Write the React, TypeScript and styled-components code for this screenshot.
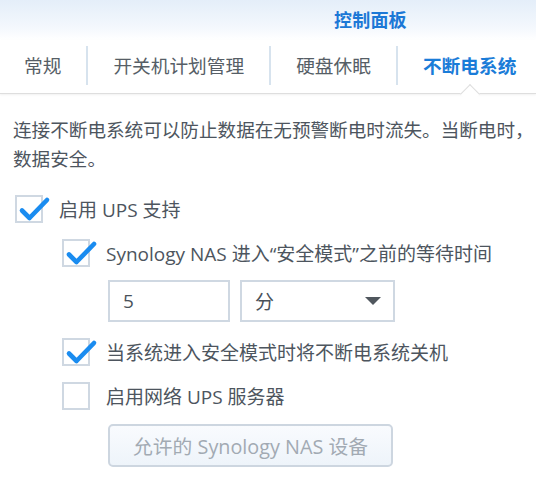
import React from "react";
import styled, { createGlobalStyle } from "styled-components";

const Global = createGlobalStyle`
  html, body { margin: 0; padding: 0; background: #fff; }
  body { font-family: "Open Sans", "Noto Sans CJK SC", sans-serif; }
`;

const Page = styled.div`
  width: 536px;
  height: 494px;
  overflow: hidden;
  background: #fff;
`;

const Header = styled.div`
  background: linear-gradient(to bottom, #e4eef9 0%, #f4f8fd 70%, #ffffff 100%);
  height: 40px;
  display: flex;
  align-items: center;
  padding: 0 0 3px 334px;
  box-sizing: border-box;
`;

const Title = styled.div`
  font-size: 18px;
  font-weight: 700;
  color: #1c78d6;
  letter-spacing: 0.2px;
`;

const TabBar = styled.div`
  display: flex;
  align-items: center;
  height: 53px;
  border-bottom: 1px solid #dedede;
  box-shadow: 0 1px 2px rgba(0, 0, 0, 0.06);
`;

const Tab = styled.div<{ $active?: boolean; $first?: boolean; $divider?: boolean }>`
  position: relative;
  flex: none;
  white-space: nowrap;
  height: 100%;
  box-sizing: border-box;
  display: flex;
  align-items: center;
  padding: 0 25px 5px ${(p) => (p.$first ? "24px" : "25px")};
  margin-left: ${(p) => (p.$divider ? "2px" : "0")};
  font-size: 18.7px;
  color: ${(p) => (p.$active ? "#1a7cd8" : "#565e66")};
  font-weight: ${(p) => (p.$active ? 700 : 400)};
  ${(p) =>
    p.$divider &&
    `
    &::before {
      content: "";
      position: absolute;
      left: -2px;
      top: 6px;
      bottom: 8px;
      width: 2px;
      background: #d7e3ee;
    }
  `}
  ${(p) =>
    p.$active &&
    `
    &::after {
      content: "";
      position: absolute;
      left: 50%;
      bottom: -8px;
      width: 13px;
      height: 13px;
      margin-left: -7px;
      background: #fff;
      border-top: 1px solid #dedede;
      border-left: 1px solid #dedede;
      transform: rotate(45deg);
    }
  `}
`;

const Content = styled.div`
  padding: 21px 0 0 13px;
  display: flex;
  flex-direction: column;
`;

const Description = styled.div`
  font-size: 18.6px;
  line-height: 29px;
  color: #4d555e;
  margin-bottom: 14px;
  white-space: nowrap;
`;

const Options = styled.div`
  display: flex;
  flex-direction: column;
  padding-left: 2px;
`;

const Row = styled.label<{ $indent?: number }>`
  display: flex;
  align-items: center;
  height: 44px;
  padding-left: ${(p) => p.$indent ?? 0}px;
  gap: 16px;
  font-size: 19px;
  color: #4d555e;
  white-space: nowrap;
`;

const Box = styled.span`
  position: relative;
  width: 28px;
  height: 28px;
  box-sizing: border-box;
  border: 2px solid #cfd8e2;
  background: #fff;
  flex: none;
`;

const Check = styled.svg`
  position: absolute;
  left: 2px;
  top: -1px;
  width: 30px;
  height: 26px;
  overflow: visible;
`;

const Fields = styled.div`
  display: flex;
  gap: 10px;
  padding-left: 93px;
  margin: 5px 0 8px;
`;

const TextInput = styled.div`
  width: 122px;
  height: 42px;
  box-sizing: border-box;
  border: 2px solid #cfd8e2;
  display: flex;
  align-items: center;
  padding-left: 13px;
  font-size: 19px;
  color: #4a525a;
`;

const Select = styled.div`
  width: 155px;
  height: 42px;
  box-sizing: border-box;
  border: 2px solid #cfd8e2;
  display: flex;
  align-items: center;
  justify-content: space-between;
  padding: 0 12px 0 13px;
  font-size: 19px;
  color: #4a525a;
`;

const Arrow = styled.span`
  width: 0;
  height: 0;
  border-left: 8.5px solid transparent;
  border-right: 8.5px solid transparent;
  border-top: 8px solid #50575e;
`;

const Button = styled.div`
  margin: 6px 0 0 93px;
  width: 285px;
  height: 43px;
  box-sizing: border-box;
  border: 2px solid #cdd6e0;
  border-radius: 5px;
  background: linear-gradient(to bottom, #f9fbfe, #eef4fa);
  display: flex;
  align-items: center;
  justify-content: center;
  font-size: 19.8px;
  color: #a2aab3;
  white-space: nowrap;
`;

const CheckBox = ({ checked }: { checked?: boolean }) => (
  <Box>
    {checked && (
      <Check viewBox="0 0 30 26">
        <path
          d="M3 14.5 L10.5 22 L28 4"
          fill="none"
          stroke="#1a8cf0"
          strokeWidth="4.6"
          strokeLinecap="round"
          strokeLinejoin="round"
        />
      </Check>
    )}
  </Box>
);

export default function App() {
  return (
    <Page>
      <Global />
      <Header>
        <Title>控制面板</Title>
      </Header>
      <TabBar>
        <Tab $first>常规</Tab>
        <Tab $divider>开关机计划管理</Tab>
        <Tab $divider>硬盘休眠</Tab>
        <Tab $divider $active>
          不断电系统
        </Tab>
      </TabBar>
      <Content>
        <Description>
          连接不断电系统可以防止数据在无预警断电时流失。当断电时，
          <br />
          数据安全。
        </Description>
        <Options>
          <Row>
            <CheckBox checked />
            启用 UPS 支持
          </Row>
          <Row $indent={47}>
            <CheckBox checked />
            Synology NAS 进入“安全模式”之前的等待时间
          </Row>
          <Fields>
            <TextInput>5</TextInput>
            <Select>
              分
              <Arrow />
            </Select>
          </Fields>
          <Row $indent={47}>
            <CheckBox checked />
            当系统进入安全模式时将不断电系统关机
          </Row>
          <Row $indent={47}>
            <CheckBox />
            启用网络 UPS 服务器
          </Row>
          <Button>允许的 Synology NAS 设备</Button>
        </Options>
      </Content>
    </Page>
  );
}
